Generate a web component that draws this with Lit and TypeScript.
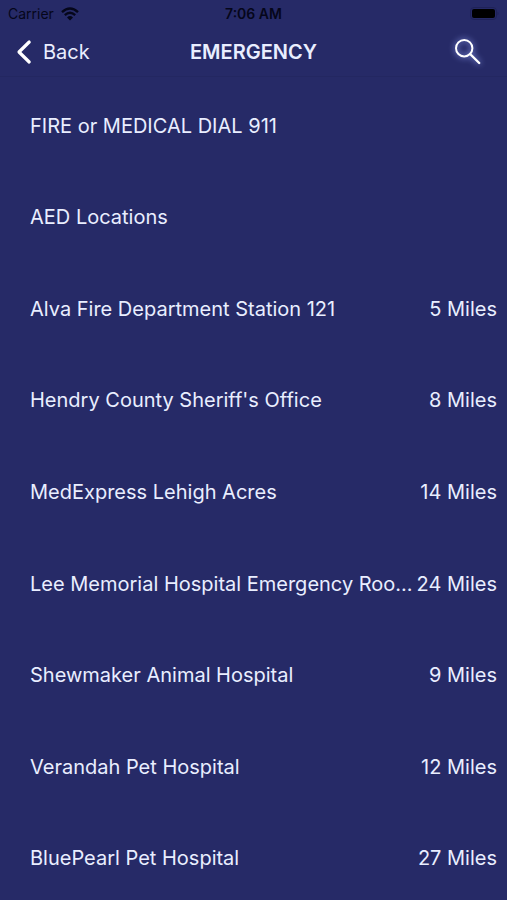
import { LitElement, html, css, nothing } from "lit";
import { customElement, property } from "lit/decorators.js";

interface Place {
  name: string;
  distance?: string;
}

const places: Place[] = [
  { name: "FIRE or MEDICAL DIAL 911" },
  { name: "AED Locations" },
  { name: "Alva Fire Department Station 121", distance: "5 Miles" },
  { name: "Hendry County Sheriff's Office", distance: "8 Miles" },
  { name: "MedExpress Lehigh Acres", distance: "14 Miles" },
  { name: "Lee Memorial Hospital Emergency Roo...", distance: "24 Miles" },
  { name: "Shewmaker Animal Hospital", distance: "9 Miles" },
  { name: "Verandah Pet Hospital", distance: "12 Miles" },
  { name: "BluePearl Pet Hospital", distance: "27 Miles" },
];

@customElement("status-bar")
export class StatusBar extends LitElement {
  static styles = css`
    :host {
      display: grid;
      grid-template-columns: 1fr auto 1fr;
      align-items: center;
      height: 28px;
      padding: 0 8px;
      color: #05061a;
      font-size: 14px;
      line-height: 28px;
    }
    .carrier {
      display: flex;
      align-items: center;
      gap: 7px;
    }
    .time {
      font-weight: 600;
    }
    .battery {
      justify-self: end;
    }
    svg {
      display: block;
    }
  `;

  render() {
    return html`
      <span class="carrier">
        Carrier
        <svg width="18" height="14" viewBox="0 0 18 14" aria-hidden="true">
          <path d="M1 5.2Q9-2.2 17 5.2" fill="none" stroke="currentColor" stroke-width="2.4" />
          <path d="M3.8 8.2Q9 3.4 14.2 8.2" fill="none" stroke="currentColor" stroke-width="2.3" />
          <path d="M6 10.4Q9 7.8 12 10.4L9 13.6Z" fill="currentColor" />
        </svg>
      </span>
      <span class="time">7:06 AM</span>
      <svg class="battery" width="29" height="14" viewBox="0 0 29 14" aria-hidden="true">
        <rect x="0.5" y="0.5" width="26" height="12" rx="3.5" fill="none" stroke="#1f2258" />
        <rect x="2" y="2" width="23" height="9" rx="2" fill="#000" />
        <path d="M27.5 4.5Q29.5 6.5 27.5 8.5Z" fill="#1f2258" />
      </svg>
    `;
  }
}

@customElement("nav-bar")
export class NavBar extends LitElement {
  @property() heading = "";

  static styles = css`
    :host {
      display: grid;
      grid-template-columns: 1fr auto 1fr;
      align-items: center;
      height: 48px;
      padding: 0 16px;
      border-bottom: 1px solid #232761;
    }
    button {
      display: flex;
      align-items: center;
      gap: 11px;
      padding: 0;
      border: 0;
      background: none;
      color: inherit;
      font: inherit;
    }
    h1 {
      margin: 0;
      font-size: 20px;
      font-weight: 600;
      line-height: 28px;
    }
    .search {
      justify-self: end;
      padding-right: 8px;
    }
    .glow {
      filter: drop-shadow(0 0 3px #98a8ff);
    }
    svg {
      display: block;
      overflow: visible;
    }
  `;

  render() {
    return html`
      <button class="back">
        <svg width="16" height="24" viewBox="0 0 16 24" aria-hidden="true">
          <path d="M13.2 2L3 12L13.2 22" fill="none" stroke="#fff" stroke-width="3.2" stroke-linecap="round" stroke-linejoin="round" />
        </svg>
        Back
      </button>
      <h1>${this.heading}</h1>
      <button class="search" aria-label="Search">
        <svg class="glow" width="28" height="28" viewBox="0 0 28 28" aria-hidden="true">
          <circle cx="9.2" cy="10.2" r="8.2" fill="none" stroke="#fff" stroke-width="2" />
          <path d="M15.1 16L24.2 25" fill="none" stroke="#fff" stroke-width="2.4" stroke-linecap="round" />
        </svg>
      </button>
    `;
  }
}

@customElement("app-root")
export class AppRoot extends LitElement {
  static styles = css`
    :host {
      display: block;
      height: 100vh;
      overflow-y: auto;
      scrollbar-width: none;
      background: #262a67;
      color: #e9eeff;
      font-family: Inter, "Liberation Sans", sans-serif;
      font-size: 20px;
      line-height: 28px;
    }
    header {
      position: sticky;
      top: 0;
      height: 80px;
      background: #262a67;
    }
    ul {
      display: grid;
      grid-auto-rows: 1fr;
      min-height: calc(100vh - 76px);
      margin: 0;
      padding: 0;
      list-style: none;
    }
    li {
      min-width: 0;
    }
    a {
      display: flex;
      align-items: center;
      gap: 4px;
      height: 100%;
      min-height: 64px;
      box-sizing: border-box;
      padding: 0 10px 0 30px;
      color: inherit;
      text-decoration: none;
    }
    .name {
      flex: 1;
      min-width: 0;
      overflow: hidden;
      white-space: nowrap;
      text-overflow: ellipsis;
    }
    .distance {
      white-space: nowrap;
    }
  `;

  render() {
    return html`
      <header>
        <status-bar></status-bar>
        <nav-bar heading=${"EMERGENCY"}></nav-bar>
      </header>
      <ul>
        ${places.map(
          (place) => html`
            <li>
              <a href="#">
                <span class="name">${place.name}</span>
                ${place.distance ? html`<span class="distance">${place.distance}</span>` : nothing}
              </a>
            </li>
          `,
        )}
      </ul>
    `;
  }
}
